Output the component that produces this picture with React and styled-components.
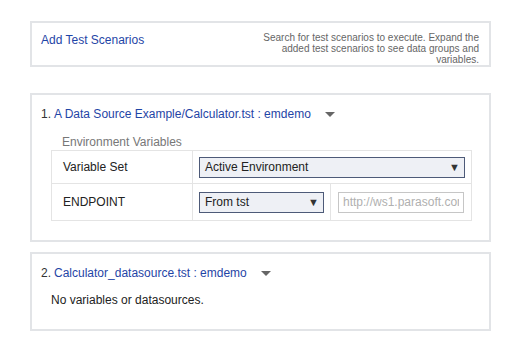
import React from "react";
import styled, { createGlobalStyle } from "styled-components";

const GlobalStyle = createGlobalStyle`
  body {
    margin: 0;
    background: #ffffff;
    font-family: "Liberation Sans", Arial, sans-serif;
    color: #222;
  }
`;

const Page = styled.div`
  width: 461px;
  padding: 21px 0 0 30px;
  display: flex;
  flex-direction: column;
`;

const Panel = styled.section`
  border: 2px solid #e2e4e7;
  margin-bottom: ${(p) => p.gap || 0}px;
`;

const HeaderPanel = styled(Panel)`
  display: flex;
  justify-content: space-between;
  align-items: flex-start;
  height: 42px;
  padding: 0 10px 0 9px;
`;

const AddLink = styled.a`
  color: #1f45a6;
  font-size: 12px;
  margin-top: 10px;
  cursor: pointer;
`;

const Hint = styled.p`
  margin: 9px 0 0;
  width: 230px;
  font-size: 10px;
  line-height: 11px;
  color: #666;
  text-align: right;
`;

const ScenarioPanel = styled(Panel)`
  padding: 12px 18px ${(p) => p.bottom}px 9px;
`;

const TitleRow = styled.div`
  display: flex;
  align-items: center;
  font-size: 12px;
  height: 14px;
`;

const Index = styled.span`
  color: #333;
  margin-right: 3px;
`;

const ScenarioName = styled.a`
  color: #1f45a6;
  cursor: pointer;
`;

const Caret = styled.span`
  display: inline-block;
  margin-left: ${(p) => p.offset}px;
  width: 0;
  height: 0;
  border-left: 5px solid transparent;
  border-right: 5px solid transparent;
  border-top: 5px solid #666;
`;

const Body = styled.div`
  padding-left: 10px;
`;

const SectionLabel = styled.div`
  font-size: 12px;
  color: #777;
  margin: 14px 0 0 11px;
  height: 15px;
`;

const VarTable = styled.table`
  border-collapse: collapse;
  width: 420px;
  table-layout: fixed;
  font-size: 12px;
  color: #222;
`;

const Cell = styled.td`
  border: 1px solid #e4e4e4;
  height: ${(p) => p.h}px;
  padding: 0 ${(p) => p.px ?? 6}px;
  vertical-align: middle;
  box-sizing: border-box;
`;

const LabelCell = styled(Cell)`
  padding-left: 11px;
`;

const Select = styled.div`
  display: flex;
  justify-content: space-between;
  align-items: center;
  height: 21px;
  box-sizing: border-box;
  border: 1px solid #4d5a78;
  background: #eef0f5;
  padding: 0 4px 0 5px;
  font-size: 12px;
  color: #222;
`;

const Arrow = styled.span`
  font-size: 11px;
  color: #333;
`;

const TextInput = styled.input`
  width: 100%;
  height: 21px;
  box-sizing: border-box;
  border: 1px solid #c6c6c6;
  padding: 0 4px;
  font-family: "Liberation Sans", Arial, sans-serif;
  font-size: 12px;
  color: #aaa;
  background: #fff;
  &::placeholder {
    color: #b0b0b0;
  }
`;

const Empty = styled.div`
  font-size: 12px;
  color: #222;
  margin-top: 13px;
`;

export default function App() {
  return (
    <>
      <GlobalStyle />
      <Page>
        <HeaderPanel gap={26}>
          <AddLink>Add Test Scenarios</AddLink>
          <Hint>
            Search for test scenarios to execute. Expand the added test
            scenarios to see data groups and variables.
          </Hint>
        </HeaderPanel>

        <ScenarioPanel gap={10} bottom={19}>
          <TitleRow>
            <Index>1.</Index>
            <ScenarioName>A Data Source Example/Calculator.tst : emdemo</ScenarioName>
            <Caret offset={14} />
          </TitleRow>
          <Body>
            <SectionLabel>Environment Variables</SectionLabel>
            <VarTable>
              <colgroup>
                <col style={{ width: 141 }} />
                <col style={{ width: 138 }} />
                <col style={{ width: 141 }} />
              </colgroup>
              <tbody>
                <tr>
                  <LabelCell h={33}>Variable Set</LabelCell>
                  <Cell h={33} colSpan={2}>
                    <Select>
                      Active Environment
                      <Arrow>▼</Arrow>
                    </Select>
                  </Cell>
                </tr>
                <tr>
                  <LabelCell h={37}>ENDPOINT</LabelCell>
                  <Cell h={37}>
                    <Select>
                      From tst
                      <Arrow>▼</Arrow>
                    </Select>
                  </Cell>
                  <Cell h={37} px={7}>
                    <TextInput placeholder="http://ws1.parasoft.com" readOnly />
                  </Cell>
                </tr>
              </tbody>
            </VarTable>
          </Body>
        </ScenarioPanel>

        <ScenarioPanel bottom={22}>
          <TitleRow>
            <Index>2.</Index>
            <ScenarioName>Calculator_datasource.tst : emdemo</ScenarioName>
            <Caret offset={14} />
          </TitleRow>
          <Body>
            <Empty>No variables or datasources.</Empty>
          </Body>
        </ScenarioPanel>
      </Page>
    </>
  );
}
